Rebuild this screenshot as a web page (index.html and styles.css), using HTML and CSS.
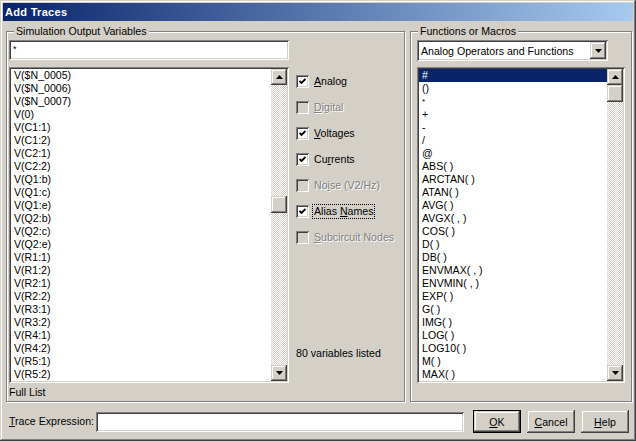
FILE: index.html
```html
<!DOCTYPE html>
<html lang="en">
<head>
    <meta charset="UTF-8">
    <meta name="viewport" content="width=device-width, initial-scale=1.0">
    <title>Add Traces</title>
    <link rel="stylesheet" href="styles.css">
</head>
<body>

<div class="window">
    <div class="titlebar">Add Traces</div>

    <div class="main">
        <!-- Simulation Output Variables -->
        <div class="group group-vars">
            <span class="group-label">Simulation Output Variables</span>
            <div class="vars-col">
                <div class="textbox filter">*</div>
                <div class="listbox list-vars">
                    <ul class="items">
                        <li>V($N_0005)</li>
                        <li>V($N_0006)</li>
                        <li>V($N_0007)</li>
                        <li>V(0)</li>
                        <li>V(C1:1)</li>
                        <li>V(C1:2)</li>
                        <li>V(C2:1)</li>
                        <li>V(C2:2)</li>
                        <li>V(Q1:b)</li>
                        <li>V(Q1:c)</li>
                        <li>V(Q1:e)</li>
                        <li>V(Q2:b)</li>
                        <li>V(Q2:c)</li>
                        <li>V(Q2:e)</li>
                        <li>V(R1:1)</li>
                        <li>V(R1:2)</li>
                        <li>V(R2:1)</li>
                        <li>V(R2:2)</li>
                        <li>V(R3:1)</li>
                        <li>V(R3:2)</li>
                        <li>V(R4:1)</li>
                        <li>V(R4:2)</li>
                        <li>V(R5:1)</li>
                        <li>V(R5:2)</li>
                    </ul>
                    <div class="scrollbar">
                        <div class="sb-btn"><svg width="7" height="4" viewBox="0 0 7 4"><polygon points="0,4 7,4 3.5,0"/></svg></div>
                        <div class="sb-track"><div class="sb-thumb thumb-vars"></div></div>
                        <div class="sb-btn"><svg width="7" height="4" viewBox="0 0 7 4"><polygon points="0,0 7,0 3.5,4"/></svg></div>
                    </div>
                </div>
                <div class="caption full-list">Full List</div>
            </div>

            <div class="checks">
                <div class="check"><span class="box"><svg width="7" height="7" viewBox="0 0 7 7"><path d="M0.5 3 L2.5 5 L6.5 1"/></svg></span><span class="text"><u>A</u>nalog</span></div>
                <div class="check off"><span class="box"></span><span class="text"><u>D</u>igital</span></div>
                <div class="check"><span class="box"><svg width="7" height="7" viewBox="0 0 7 7"><path d="M0.5 3 L2.5 5 L6.5 1"/></svg></span><span class="text"><u>V</u>oltages</span></div>
                <div class="check"><span class="box"><svg width="7" height="7" viewBox="0 0 7 7"><path d="M0.5 3 L2.5 5 L6.5 1"/></svg></span><span class="text">Cu<u>r</u>rents</span></div>
                <div class="check off"><span class="box"></span><span class="text">No<u>i</u>se (V2/Hz)</span></div>
                <div class="check focus"><span class="box"><svg width="7" height="7" viewBox="0 0 7 7"><path d="M0.5 3 L2.5 5 L6.5 1"/></svg></span><span class="text">Alias <u>N</u>ames</span></div>
                <div class="check off"><span class="box"></span><span class="text"><u>S</u>ubcircuit Nodes</span></div>
                <div class="count">80 variables listed</div>
            </div>
        </div>

        <!-- Functions or Macros -->
        <div class="group group-funcs">
            <span class="group-label">Functions or Macros</span>
            <div class="combo">
                <span class="combo-text">Analog Operators and Functions</span>
                <span class="sb-btn combo-btn"><svg width="7" height="4" viewBox="0 0 7 4"><polygon points="0,0 7,0 3.5,4"/></svg></span>
            </div>
            <div class="listbox list-funcs">
                <ul class="items">
                    <li class="sel">#</li>
                    <li>()</li>
                    <li class="small">*</li>
                    <li>+</li>
                    <li>-</li>
                    <li>/</li>
                    <li>@</li>
                    <li>ABS( )</li>
                    <li>ARCTAN( )</li>
                    <li>ATAN( )</li>
                    <li>AVG( )</li>
                    <li>AVGX( , )</li>
                    <li>COS( )</li>
                    <li>D( )</li>
                    <li>DB( )</li>
                    <li>ENVMAX( , )</li>
                    <li>ENVMIN( , )</li>
                    <li>EXP( )</li>
                    <li>G( )</li>
                    <li>IMG( )</li>
                    <li>LOG( )</li>
                    <li>LOG10( )</li>
                    <li>M( )</li>
                    <li>MAX( )</li>
                </ul>
                <div class="scrollbar">
                    <div class="sb-btn"><svg width="7" height="4" viewBox="0 0 7 4"><polygon points="0,4 7,4 3.5,0"/></svg></div>
                    <div class="sb-track"><div class="sb-thumb"></div></div>
                    <div class="sb-btn"><svg width="7" height="4" viewBox="0 0 7 4"><polygon points="0,0 7,0 3.5,4"/></svg></div>
                </div>
            </div>
        </div>
    </div>

    <div class="footer">
        <span class="caption"><u>T</u>race Expression:</span>
        <div class="textbox expr"></div>
        <div class="buttons">
            <button class="btn default"><u>O</u>K</button>
            <button class="btn"><u>C</u>ancel</button>
            <button class="btn"><u>H</u>elp</button>
        </div>
    </div>
</div>

</body>
</html>
```

FILE: styles.css
```css
* {
    box-sizing: border-box;
}
body {
    margin: 0;
    font-family: "Liberation Sans", Arial, sans-serif;
    font-size: 10.6px;
    color: #000;
    background: #d4d0c8;
}
u {
    text-decoration: underline;
    text-underline-offset: 1px;
}

/* window frame */
.window {
    width: 636px;
    height: 441px;
    padding: 3px;
    background: #d4d0c8;
    box-shadow: inset -1px -1px #404040, inset 1px 1px #d4d0c8,
                inset -2px -2px #808080, inset 2px 2px #fff;
}
.titlebar {
    height: 18px;
    line-height: 18px;
    padding-left: 2px;
    font-size: 11px;
    font-weight: bold;
    letter-spacing: 0.3px;
    color: #fff;
    background: linear-gradient(to right, #0a246a, #a6caf0);
}
.main {
    display: flex;
    gap: 5px;
    margin: 10px 0 0 3px;
}

/* group boxes */
.group {
    position: relative;
    height: 371px;
    padding: 8px 0 2px 2px;
    border: 1px solid #808080;
    box-shadow: inset 1px 1px #fff, 1px 1px #fff;
}
.group-label {
    position: absolute;
    top: -7px;
    left: 7px;
    padding: 0 2px;
    line-height: 13px;
    background: #d4d0c8;
}
.group-vars {
    width: 399px;
    display: flex;
}
.group-funcs {
    width: 222px;
    padding-left: 6px;
}
.vars-col {
    width: 280px;
    display: flex;
    flex-direction: column;
}

/* sunken fields */
.textbox, .listbox, .combo, .box {
    background: #fff;
    box-shadow: inset 1px 1px #808080, inset -1px -1px #fff,
                inset 2px 2px #404040, inset -2px -2px #d4d0c8;
}
.textbox {
    height: 20px;
    padding: 2px 4px;
    line-height: 14px;
}
.filter {
    font-size: 9px;
}
.listbox {
    display: flex;
    height: 316px;
    margin-top: 7px;
    padding: 2px;
}
.list-funcs {
    width: 208px;
    margin-top: 6px;
}
.items {
    flex: 1;
    margin: 0;
    padding: 0;
    list-style: none;
    overflow: hidden;
}
.items li {
    height: 13px;
    line-height: 13px;
    padding-left: 3px;
    white-space: nowrap;
}
.items li.sel {
    background: #0a246a;
    color: #fff;
}
.items li.small {
    font-size: 8px;
}

/* scrollbars */
.scrollbar {
    width: 16px;
    display: flex;
    flex-direction: column;
}
.sb-btn, .sb-thumb, .btn {
    background: #d4d0c8;
    box-shadow: inset -1px -1px #404040, inset 1px 1px #d4d0c8,
                inset -2px -2px #808080, inset 2px 2px #fff;
}
.sb-btn {
    height: 16px;
    display: flex;
    align-items: center;
    justify-content: center;
}
.sb-track {
    flex: 1;
    background: repeating-conic-gradient(#d4d0c8 0 25%, #fff 0 50%) 0 0 / 2px 2px;
}
.sb-thumb {
    height: 17px;
}
.thumb-vars {
    margin-top: 111px;
}

.caption {
    line-height: 13px;
}
.full-list {
    margin-top: 3px;
}

/* check boxes */
.checks {
    display: flex;
    flex-direction: column;
    gap: 13px;
    margin-left: 7px;
    padding-top: 35px;
}
.check {
    display: flex;
    align-items: center;
    height: 13px;
}
.box {
    width: 13px;
    height: 13px;
    display: flex;
    align-items: center;
    justify-content: center;
}
.box path {
    fill: none;
    stroke: #000;
    stroke-width: 1.8;
}
.check .text {
    margin-left: 4px;
    padding: 0 1px;
    line-height: 13px;
}
.check.off .box {
    background: #d4d0c8;
}
.check.off .text {
    color: #808080;
    text-shadow: 1px 1px #fff;
}
.check.focus .text {
    outline: 1px dotted #000;
}
.count {
    margin-top: auto;
    margin-bottom: 39px;
    line-height: 13px;
}

/* combo box */
.combo {
    width: 191px;
    height: 21px;
    display: flex;
    align-items: center;
    padding: 2px;
}
.combo-text {
    flex: 1;
    padding-left: 2px;
}
.combo-btn {
    width: 16px;
    height: 17px;
}

/* bottom row */
.footer {
    display: flex;
    align-items: center;
    height: 23px;
    margin-top: 8px;
    padding: 0 4px 0 6px;
}
.expr {
    width: 368px;
    margin-left: auto;
    margin-right: 9px;
}
.buttons {
    display: flex;
    gap: 6px;
}
.btn {
    width: 48px;
    height: 23px;
    padding: 0;
    border: 0;
    font: inherit;
    color: #000;
}
.btn.default {
    border: 1px solid #000;
}
```
